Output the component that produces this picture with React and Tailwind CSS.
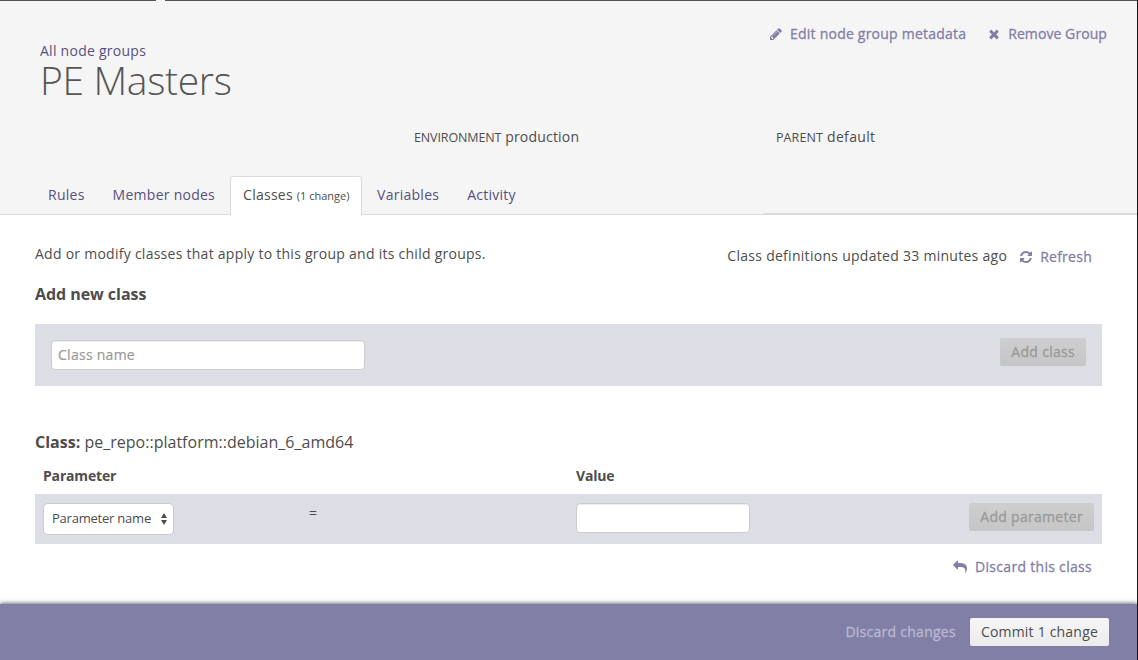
const PATHS = {
  pencil:
    "M491 1536l91-91-235-235-91 91v107h128v128h107zm523-928q0-22-22-22-10 0-17 7l-542 542q-7 7-7 17 0 22 22 22 10 0 17-7l542-542q7-7 7-17zm-54-192l416 416-832 832h-416v-416zm683 96q0 53-37 90l-166 166-416-416 166-165q36-38 90-38 53 0 91 38l235 234q37 39 37 91z",
  times:
    "M1490 1322q0 40-28 68l-136 136q-28 28-68 28t-68-28l-294-294-294 294q-28 28-68 28t-68-28l-136-136q-28-28-28-68t28-68l294-294-294-294q-28-28-28-68t28-68l136-136q28-28 68-28t68 28l294 294 294-294q28-28 68-28t68 28l136 136q28 28 28 68t-28 68l-294 294 294 294q28 28 28 68z",
  refresh:
    "M1639 1056q0 5-1 7-64 268-268 434.5t-478 166.5q-146 0-282.5-55t-243.5-157l-129 129q-19 19-45 19t-45-19-19-45v-448q0-26 19-45t45-19h448q26 0 45 19t19 45-19 45l-137 137q71 66 161 102t187 36q134 0 250-65t186-179q11-17 53-117 8-23 30-23h192q13 0 22.5 9.5t9.5 22.5zm25-800v448q0 26-19 45t-45 19h-448q-26 0-45-19t-19-45 19-45l138-138q-148-137-349-137-134 0-250 65t-186 179q-11 17-53 117-8 23-30 23h-199q-13 0-22.5-9.5t-9.5-22.5v-7q65-268 270-434.5t480-166.5q146 0 284 55.5t245 156.5l130-129q19-19 45-19t45 19 19 45z",
  reply:
    "M1792 1120q0 166-127 451-3 7-10.5 24t-13.5 30-13 22q-12 17-28 17-15 0-23.5-10t-8.5-25q0-9 2.5-26.5t2.5-23.5q5-68 5-123 0-101-17.5-181t-48.5-138.5-80-101-105.5-69.5-133-42.5-154-21.5-175.5-6h-224v256q0 26-19 45t-45 19-45-19l-512-512q-19-19-19-45t19-45l512-512q19-19 45-19t45 19 19 45v256h224q713 0 875 403 53 134 53 333z",
};

function Icon({ name }) {
  return (
    <svg viewBox="0 0 1792 1792" className="size-[14px] shrink-0 fill-current">
      <path d={PATHS[name]} />
    </svg>
  );
}

function ActionLink({ icon, className = "gap-[7px]", children }) {
  return (
    <a className={`flex items-center whitespace-nowrap text-[#827fa6] ${className}`}>
      <Icon name={icon} />
      <span className="[-webkit-text-stroke:0.3px_currentColor]">{children}</span>
    </a>
  );
}

function Tab({ children }) {
  return <a className="px-[14px] pt-[9px] whitespace-nowrap text-[#55507f]">{children}</a>;
}

function DisabledButton({ children }) {
  return (
    <button className="h-7 rounded-[2px] bg-linear-to-b from-[#cecece] to-[#c6c6c6] px-[11px] tracking-[0.3px] whitespace-nowrap text-[#999] [-webkit-text-stroke:0.3px_currentColor]">
      {children}
    </button>
  );
}

function Header() {
  return (
    <header className="h-[215px] shrink-0 bg-[#f5f5f5]">
      <div className="flex h-px justify-between bg-[#555156]">
        <div className="ml-[156px] w-[9px] bg-[#f5f5f5]" />
      </div>
      <div className="flex h-[126px] justify-between pr-[30px] pl-10">
        <div className="pt-10">
          <a className="block text-[#55507f]">All node groups</a>
          <h1 className="text-[39px] leading-[38px] font-light tracking-[-0.33px] text-[#555]">PE Masters</h1>
        </div>
        <div className="flex h-5 gap-[21px] pt-[23px]">
          <div className="h-5">
            <ActionLink icon="pencil" className="gap-[7px] tracking-[0.22px]">
              Edit node group metadata
            </ActionLink>
          </div>
          <div className="h-5">
            <ActionLink icon="times" className="gap-[7px] tracking-[0.08px]">
              Remove Group
            </ActionLink>
          </div>
        </div>
      </div>
      <div className="flex h-[49px] pl-[414px]">
        <div className="w-[362px]">
          <span className="text-[12.5px] tracking-[-0.12px]">ENVIRONMENT</span>
          <span className="tracking-[0.2px]"> production</span>
        </div>
        <div>
          <span className="text-[12.5px] tracking-[0.1px]">PARENT</span>
          <span className="tracking-[0.35px]"> default</span>
        </div>
      </div>
      <div className="flex h-[39px]">
        <nav className="flex w-[763px] border-b border-[#dadadc] pl-[34px]">
          <Tab>Rules</Tab>
          <Tab>Member nodes</Tab>
          <a className="mr-px -mb-px ml-px h-[39px] w-[132px] rounded-t-[4px] border border-b-0 border-[#dadadc] bg-white pt-[8px] pl-3 whitespace-nowrap">
            Classes <span className="text-[11px] tracking-normal">(1 change)</span>
          </a>
          <Tab>Variables</Tab>
          <Tab>Activity</Tab>
        </nav>
        <div className="flex-1 border-b-2 border-[#dadadc]" />
      </div>
    </header>
  );
}

export default function App() {
  return (
    <div className="flex h-[660px] w-[1138px] flex-col overflow-hidden border-r border-[#151515] bg-white font-['Open_Sans',sans-serif] text-[14px] leading-5 tracking-[0.26px] text-[#4d4d4d]">
      <Header />

      <main className="h-[389px] shrink-0 pr-[35px] pl-[35px]">
        <div className="flex h-[61px] justify-between pt-[29px] pr-[10px]">
          <p>Add or modify classes that apply to this group and its child groups.</p>
          <div className="flex gap-[12px] pt-[2px]">
            <span className="tracking-[0.28px]">Class definitions updated 33 minutes ago</span>
            <div className="pt-px">
              <ActionLink icon="refresh">Refresh</ActionLink>
            </div>
          </div>
        </div>
        <h2 className="h-[48px] pt-[8px] text-[16px] font-bold tracking-[-0.05px] text-[#4d4d4d]">Add new class</h2>
        <section className="flex h-[62px] justify-between bg-[#dddde6] px-4 pt-[14px]">
          <input
            placeholder="Class name"
            className="mt-[2px] h-[30px] w-[314px] rounded-[4px] border border-[#ccc] bg-white px-[6px] pb-[2px] tracking-[0.27px] shadow-[inset_0_1px_1px_rgba(0,0,0,0.075)] placeholder:text-[#999] placeholder:[-webkit-text-stroke:0.2px_currentColor]"
          />
          <DisabledButton>Add class</DisabledButton>
        </section>

        <h3 className="mt-[46px] h-[34px] text-[16px] tracking-[0.01px]">
          <b>Class:</b> pe_repo::platform::debian_6_amd64
        </h3>
        <div className="flex h-7 pl-2 font-bold tracking-[-0.18px]">
          <span className="w-[533px]">Parameter</span>
          <span>Value</span>
        </div>
        <section className="flex h-[50px] bg-[#dddde6] px-2 pt-[9px]">
          <div className="w-[266px]">
            <button className="flex h-8 w-[131px] items-center justify-between rounded-[5px] border border-[#ccc] bg-white pr-[5px] pl-2 text-[13px] tracking-[-0.22px]">
              <span className="pb-[2px]">Parameter name</span>
              <svg viewBox="0 0 8 12" className="h-3 w-2 fill-[#4d4d4d]">
                <path d="M4 0l3 5H1zM4 12L1 7h6z" />
              </svg>
            </button>
          </div>
          <span className="w-[267px]">=</span>
          <input
            aria-label="Value"
            className="h-[30px] w-[174px] rounded-[4px] border border-[#ccc] bg-white px-[6px] shadow-[inset_0_1px_1px_rgba(0,0,0,0.075)]"
          />
          <div className="ml-auto">
            <DisabledButton>Add parameter</DisabledButton>
          </div>
        </section>
        <div className="flex justify-end pt-[13px] pr-[10px]">
          <ActionLink icon="reply" className="gap-2 tracking-[0.3px]">
            Discard this class
          </ActionLink>
        </div>
      </main>

      <footer className="flex h-14 shrink-0 items-center justify-end gap-[14px] bg-[#827fa6] pr-7 shadow-[0_-1px_4px_rgba(0,0,0,0.55)]">
        <a className="text-[#bab7d5] [-webkit-text-stroke:0.3px_currentColor]">Discard changes</a>
        <button className="h-7 rounded-[2px] bg-linear-to-b from-[#f6f6f6] to-[#ebebeb] px-[11px] tracking-[0.2px] whitespace-nowrap">
          Commit 1 change
        </button>
      </footer>
    </div>
  );
}
